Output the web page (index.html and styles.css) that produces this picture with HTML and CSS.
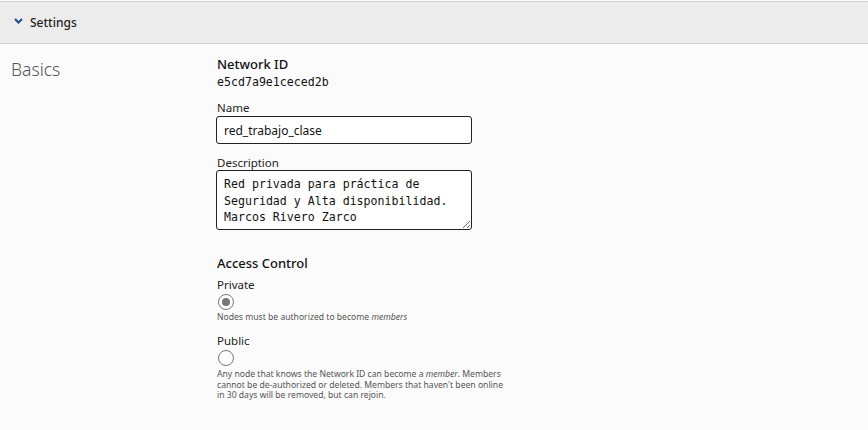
FILE: index.html
```html
<!DOCTYPE html>
<html>
<head>
<meta charset="utf-8">
<link rel="stylesheet" href="styles.css">
</head>
<body>
<div class="panel">
  <div class="panel-head">
    <svg class="chev" width="9" height="6" viewBox="0 0 9 6"><path d="M1 1 L4.5 4.5 L8 1" fill="none" stroke="#1c4d8c" stroke-width="2"/></svg>
    <span class="panel-title">Settings</span>
  </div>
  <div class="panel-body">
    <div class="side">Basics</div>
    <div class="form">
      <div class="h">Network ID</div>
      <div class="mono-id">e5cd7a9e1ceced2b</div>
      <label class="lbl lbl-name">Name</label>
      <input class="inp" type="text" value="red_trabajo_clase">
      <label class="lbl lbl-desc">Description</label>
      <textarea class="ta">Red privada para práctica de
Seguridad y Alta disponibilidad.
Marcos Rivero Zarco</textarea>
      <div class="h h-access">Access Control</div>
      <div class="opt">Private</div>
      <span class="radio checked"></span>
      <div class="note">Nodes must be authorized to become <em>members</em></div>
      <div class="opt opt-public">Public</div>
      <span class="radio"></span>
      <div class="note note-long">Any node that knows the Network ID can become a <em>member</em>. Members cannot be de-authorized or deleted. Members that haven't been online in 30 days will be removed, but can rejoin.</div>
    </div>
  </div>
</div>
</body>
</html>
```
FILE: styles.css
```css
html, body {
  margin: 0;
  padding: 0;
  background: #fbfbfb;
  font-family: "Noto Sans", "Open Sans", sans-serif;
  color: #222;
}
.panel {
  padding-top: 1px;
}
.panel-head {
  display: flex;
  align-items: center;
  height: 41px;
  background: #ececec;
  border-top: 1px solid #d2d2d2;
  border-bottom: 1px solid #cfcfcf;
  padding-left: 14px;
}
.chev {
  display: block;
  margin-right: 7px;
  margin-top: -3px;
}
.panel-title {
  font-size: 12px;
  font-weight: 500;
  color: #1e1e1e;
}
.panel-body {
  display: flex;
}
.side {
  width: 206px;
  padding-left: 11px;
  padding-top: 13px;
  font-size: 17.5px;
  font-weight: 300;
  color: #555;
}
.form {
  display: flex;
  flex-direction: column;
  align-items: flex-start;
  padding-top: 11px;
  width: 300px;
}
.h {
  font-size: 13px;
  font-weight: 500;
  line-height: 18px;
  color: #111;
}
.mono-id {
  font-family: "DejaVu Sans Mono", monospace;
  font-size: 11.6px;
  line-height: 16px;
  color: #111;
  margin-top: 1px;
}
.lbl {
  font-size: 11.5px;
  line-height: 16px;
  color: #222;
}
.lbl-name {
  margin-top: 10px;
}
.inp {
  box-sizing: border-box;
  width: 256px;
  height: 28px;
  margin: 0 0 0 -1px;
  border: 1px solid #222;
  border-radius: 3px;
  background: #fff;
  padding: 0 7px;
  font-family: "Noto Sans", "Open Sans", sans-serif;
  font-size: 12px;
  color: #111;
  outline: none;
}
.lbl-desc {
  margin-top: 11px;
}
.ta {
  box-sizing: border-box;
  width: 256px;
  height: 60px;
  margin: -1px 0 0 -1px;
  border: 1px solid #222;
  border-radius: 3px;
  background: #fff;
  padding: 5px 7px 2px;
  font-family: "DejaVu Sans Mono", monospace;
  font-size: 11.6px;
  line-height: 16.5px;
  color: #111;
  resize: vertical;
  outline: none;
  overflow: hidden;
}
.h-access {
  margin-top: 24px;
}
.opt {
  font-size: 11.5px;
  line-height: 16px;
  margin-top: 5px;
  color: #222;
}
.opt-public {
  margin-top: 10px;
}
.radio {
  display: block;
  box-sizing: border-box;
  width: 16px;
  height: 16px;
  border: 1.5px solid #777;
  border-radius: 50%;
  margin-top: 1px;
  margin-left: 1px;
  position: relative;
  background: #fff;
}
.radio.checked::after {
  content: "";
  position: absolute;
  left: 2.5px;
  top: 2.5px;
  width: 8px;
  height: 8px;
  border-radius: 50%;
  background: #777;
}
.note {
  font-size: 8.6px;
  line-height: 11px;
  color: #555;
  width: 292px;
  margin-top: 2px;
}
.note-long {
  margin-top: 3px;
  line-height: 10.6px;
}
```
